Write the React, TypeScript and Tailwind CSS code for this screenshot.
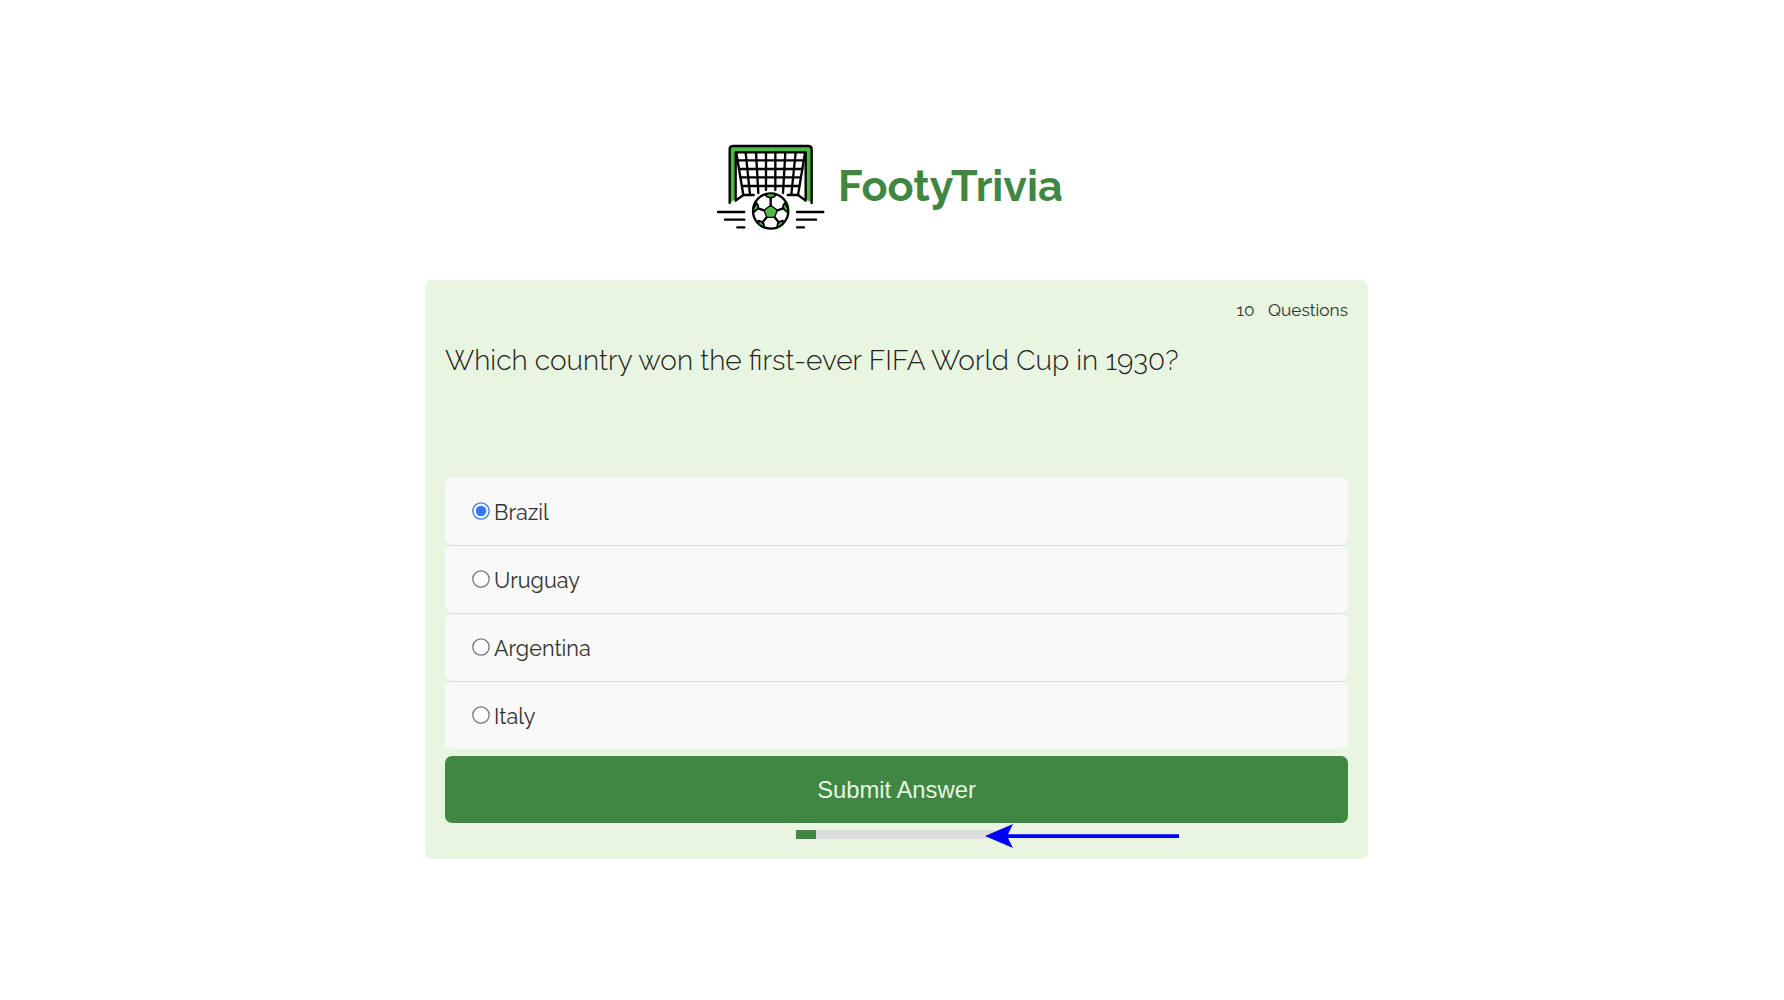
import { useState } from "react";

const options = ["Brazil", "Uruguay", "Argentina", "Italy"];

function Logo() {
  return (
    <svg className="h-[110px] w-[130px] shrink-0" viewBox="0 0 390 330" fill="none" stroke="#000" strokeWidth="7" strokeLinecap="round" strokeLinejoin="round">
      <path d="M74 219V58Q74 48 84 48H310Q320 48 320 58V219L302 207V67H92V207Z" fill="#51b848" stroke="none" />
      <path d="M74 219V58Q74 48 84 48H310Q320 48 320 58V219" />
      <path d="M92 212V67H302V212M92 212L115 195M302 212L279 195" />
      <path d="M94 69L115 195H146M300 69L279 195H248" />
      <path d="M122 68L135 194M153 68L160 189M183 68V180M211 68V180M241 68L234 189M272 68L259 194" />
      <path d="M98 91H296M102 117H292M107 142H287M111 168H283" />
      <circle cx="197" cy="243" r="53" fill="#fff" />
      <path d="M180 193Q197 188 214 193L208 200L197 204L186 200ZM146 234L155 219L160 228L158 237L145 248ZM248 234L239 219L234 228L236 237L249 248ZM161 283L160 272L168 274L176 281L178 293ZM233 283L234 272L226 274L218 281L216 293Z" fill="#51b848" strokeWidth="5" />
      <path d="M197 226L217 241L209 262H185L177 241Z" fill="#51b848" strokeWidth="4" />
      <path d="M197 204V225M159 235L177 241M235 235L217 241M185 262L173 277M209 262L221 277" strokeWidth="7" />
      <path d="M39 246H118M60 269H118M97 292H118M276 246H355M276 269H333M276 292H297" />
    </svg>
  );
}

export default function App() {
  const [selected, setSelected] = useState(0);
  return (
    <main className="flex h-[1000px] w-full flex-col bg-white pt-[130px] font-['Raleway','Lato',sans-serif] text-[#333]">
      <header className="ml-[705px] flex h-[150px]">
        <Logo />
        <h1 className="mt-[26px] ml-[3px] text-[43.1px] leading-[60px] font-bold whitespace-nowrap text-[#3f8742]">FootyTrivia</h1>
      </header>
      <section className="ml-[425px] flex h-[579px] w-[943px] flex-col rounded-[7px] bg-[#e8f5e0] px-5 pt-[19px]">
        <div className="flex h-[22px] justify-end gap-[13.5px] text-[17.3px] leading-[22px]">
          <span>10</span>
          <span>Questions</span>
        </div>
        <h2 className="mt-5 h-[137px] text-[28.03px] leading-[40px] font-light whitespace-nowrap text-[#222]">Which country won the first-ever FIFA World Cup in 1930?</h2>
        <div className="flex flex-col">
          {options.map((option, i) => (
            <label key={option} className="flex h-[68px] items-center rounded-[7px] border-b border-[#ddd] bg-[#f9f9f9] pl-[27px] last:border-transparent last:bg-clip-padding">
              <input type="radio" name="answer" className="sr-only" checked={selected === i} onChange={() => setSelected(i)} />
              <svg className="mb-[1px] size-[18px]" viewBox="0 0 18 18">
                <circle cx="9" cy="9" r="8.2" fill="#fff" stroke={selected === i ? "#3478f6" : "#767676"} strokeWidth="1.3" />
                {selected === i && <circle cx="9" cy="9" r="5.2" fill="#3478f6" />}
              </svg>
              <span className="ml-1 pt-[2px] text-[21.6px] leading-[30px]">{option}</span>
            </label>
          ))}
        </div>
        <button className="mt-[6px] h-[67px] shrink-0 rounded-[7px] bg-[#3f8742] pt-px font-['Liberation_Sans',Arial,sans-serif] text-[23.8px] text-[#e8f5e0]">Submit Answer</button>
        <div className="relative mt-[7px] ml-[350.5px] h-[9px] w-[203px] bg-[#ddd]">
          <div className="h-full w-[20.5px] bg-[#3f8742]" />
          <svg className="absolute top-[-6px] left-[189.5px] h-6 w-[195px]" viewBox="0 0 195 24" fill="#00f">
            <path d="M0 12L28 0L23 10.3H194V14H23L28 24Z" />
          </svg>
        </div>
      </section>
    </main>
  );
}
